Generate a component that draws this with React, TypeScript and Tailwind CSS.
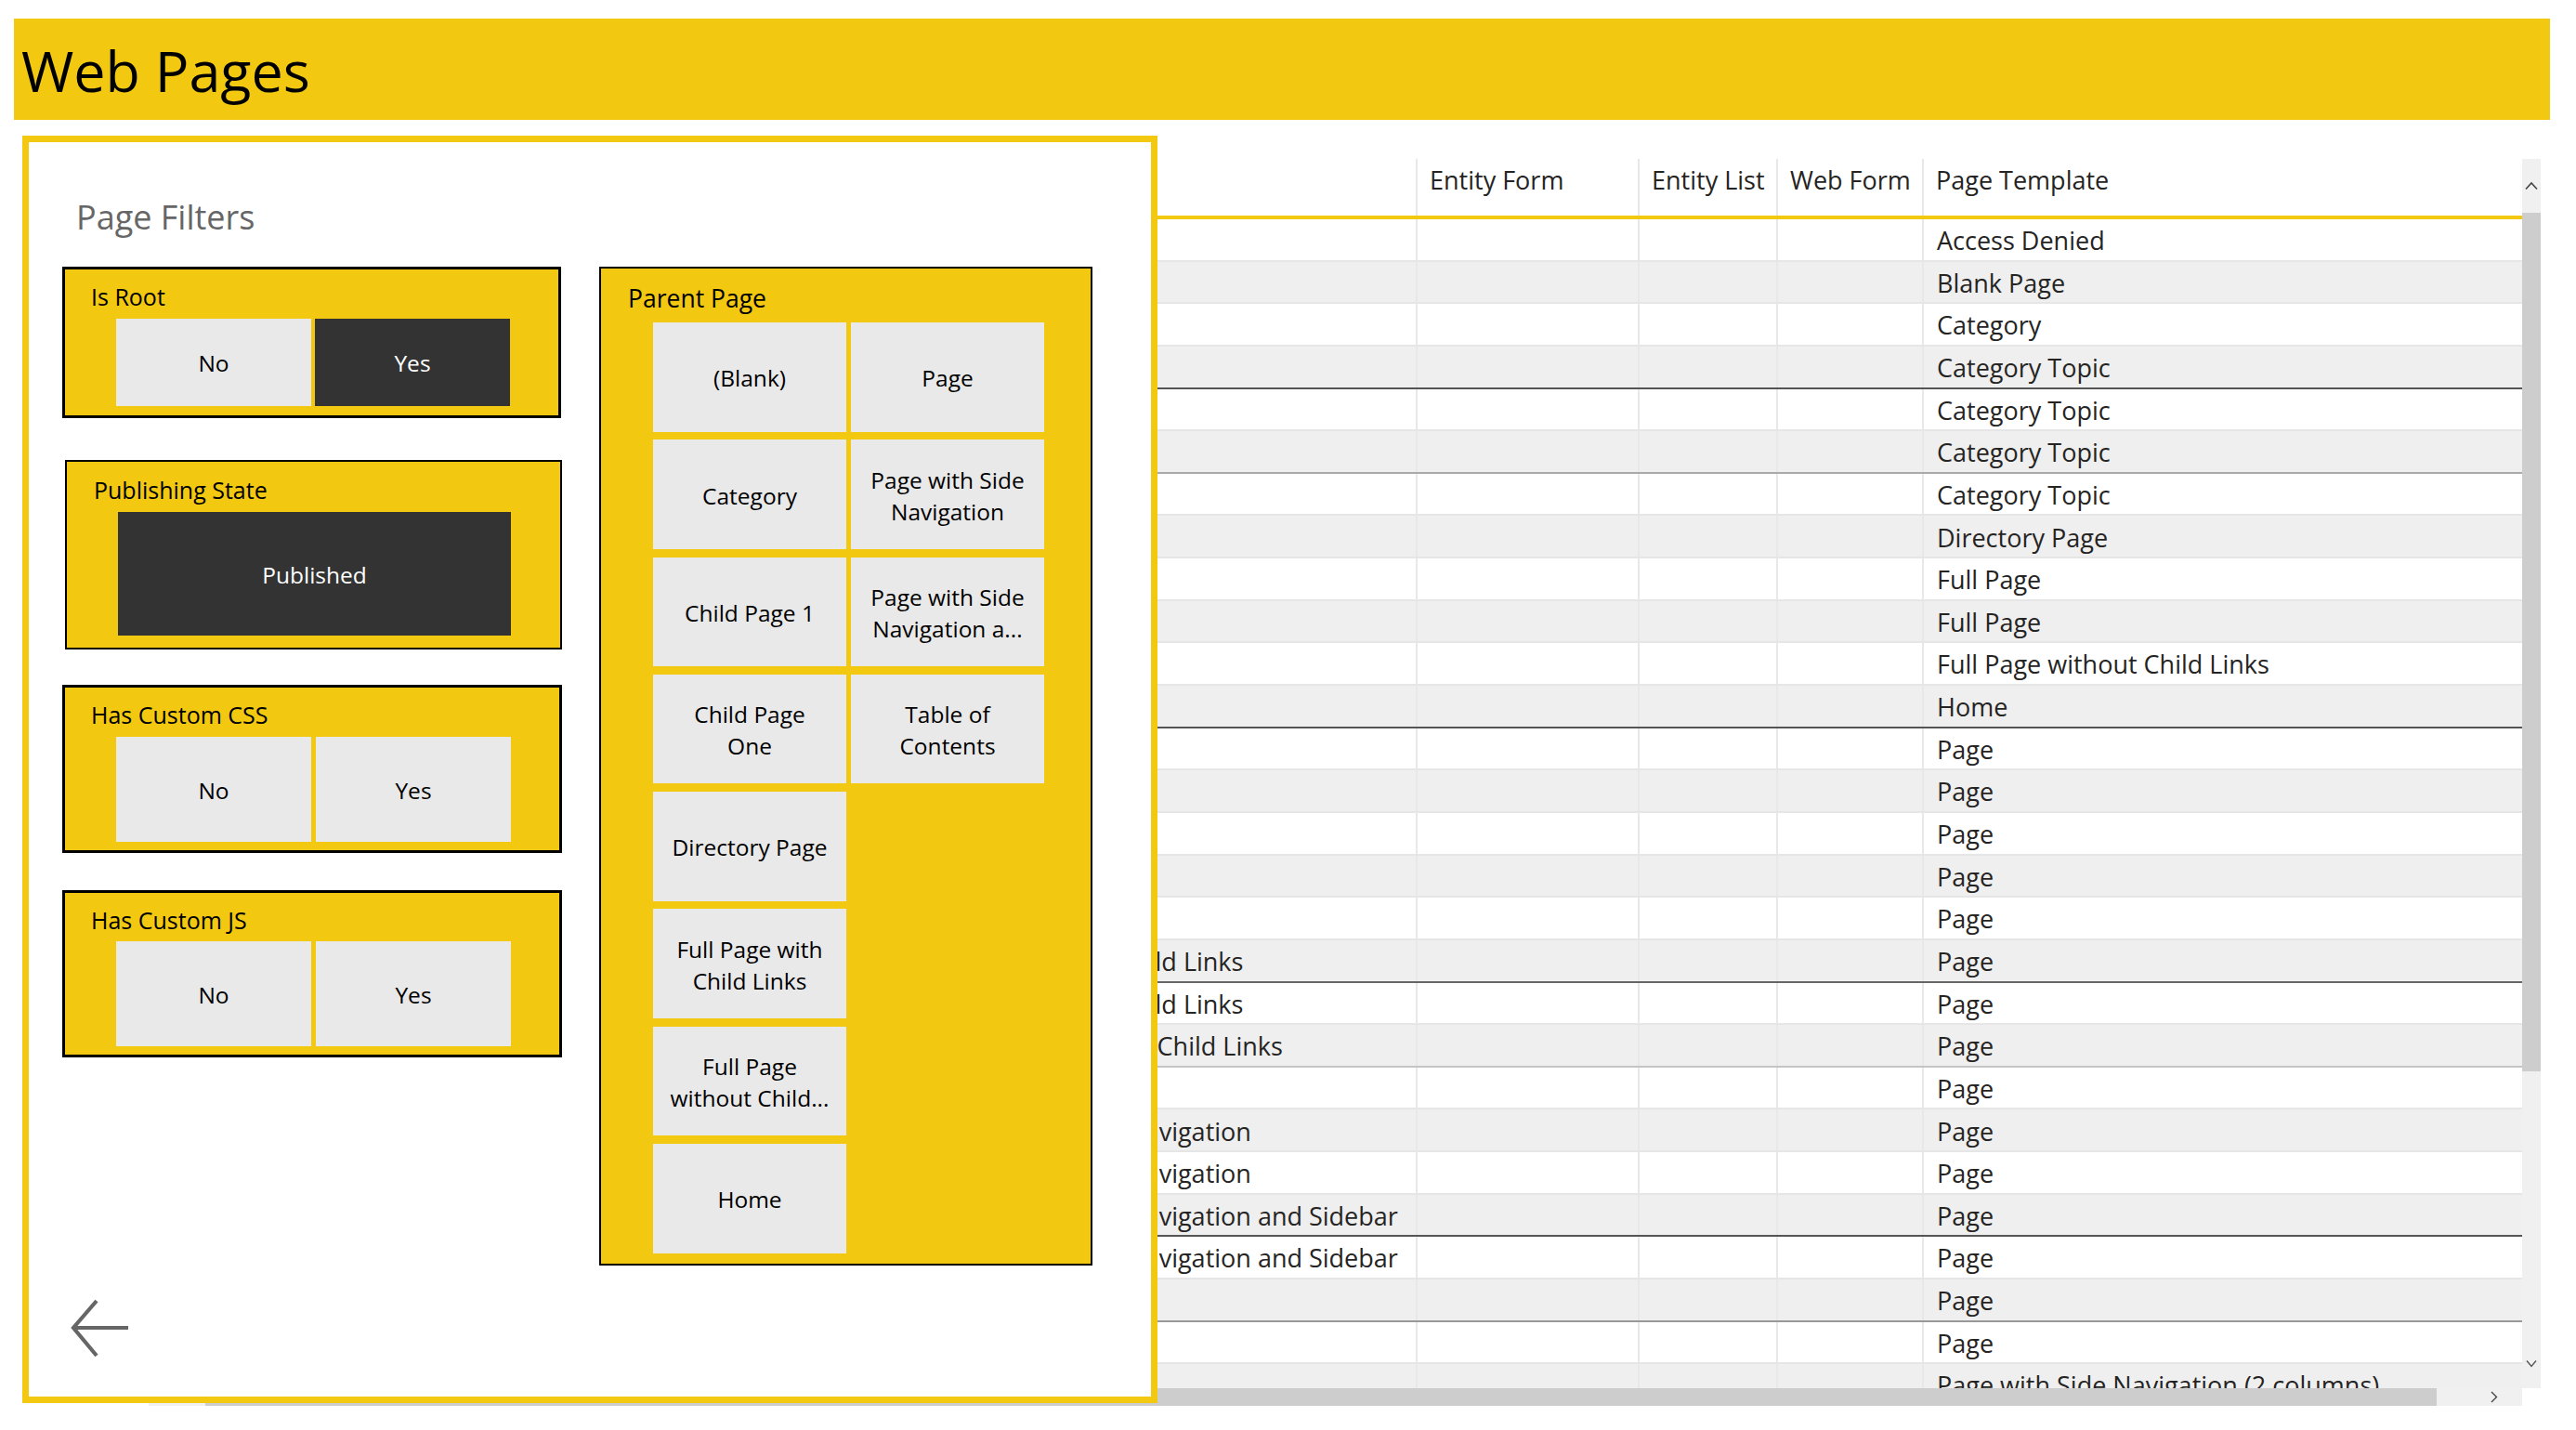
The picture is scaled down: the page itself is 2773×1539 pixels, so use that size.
import React from "react";

const YELLOW = "bg-[#F2C811]";

type Row = { parent: string; template: string; line?: string };

const ROWS: Row[] = [
  { parent: "", template: "Access Denied" },
  { parent: "", template: "Blank Page" },
  { parent: "", template: "Category" },
  { parent: "", template: "Category Topic", line: "border-b-[#555555]" },
  { parent: "", template: "Category Topic" },
  { parent: "", template: "Category Topic", line: "border-b-[#aaaaaa]" },
  { parent: "", template: "Category Topic" },
  { parent: "", template: "Directory Page" },
  { parent: "", template: "Full Page" },
  { parent: "", template: "Full Page" },
  { parent: "", template: "Full Page without Child Links" },
  { parent: "", template: "Home", line: "border-b-[#555555]" },
  { parent: "", template: "Page" },
  { parent: "", template: "Page" },
  { parent: "", template: "Page" },
  { parent: "", template: "Page" },
  { parent: "", template: "Page" },
  { parent: "Full Page with Child Links", template: "Page", line: "border-b-[#666666]" },
  { parent: "Full Page with Child Links", template: "Page" },
  { parent: "Full Page without Child Links", template: "Page", line: "border-b-[#c4c4c4]" },
  { parent: "", template: "Page" },
  { parent: "Page with Side Navigation", template: "Page" },
  { parent: "Page with Side Navigation", template: "Page" },
  { parent: "Page with Side Navigation and Sidebar", template: "Page", line: "border-b-[#555555]" },
  { parent: "Page with Side Navigation and Sidebar", template: "Page" },
  { parent: "", template: "Page", line: "border-b-[#999999]" },
  { parent: "", template: "Page" },
  { parent: "", template: "Page with Side Navigation (2 columns)" },
];

const PARENT_TILES: (string[] | null)[][] = [
  [["(Blank)"], ["Page"]],
  [["Category"], ["Page with Side", "Navigation"]],
  [["Child Page 1"], ["Page with Side", "Navigation a..."]],
  [["Child Page", "One"], ["Table of", "Contents"]],
  [["Directory Page"], null],
  [["Full Page with", "Child Links"], null],
  [["Full Page", "without Child..."], null],
  [["Home"], null],
];

function Cell({ w, children, last }: { w: string; children?: React.ReactNode; last?: boolean }) {
  return (
    <div
      className={`${w} shrink-0 h-full flex items-center pl-[13px] pt-[3px] overflow-hidden whitespace-nowrap ${
        last ? "" : "border-r-2 border-r-[#e8e8e8]"
      }`}
    >
      {children}
    </div>
  );
}

function DataTable() {
  return (
    <div className="ml-[160px] mt-[42px] w-[2575px] flex flex-col text-[27px] text-[#252423]">
      <div className="flex h-[1323px]">
        <div className="flex-1 overflow-hidden">
          <div className="flex h-[65px] border-b-4 border-b-[#F2C811]">
            {[
              ["w-[850px]", "Name"],
              ["w-[516px]", "Parent Page"],
              ["w-[239px]", "Entity Form"],
              ["w-[149px]", "Entity List"],
              ["w-[157px]", "Web Form"],
              ["w-[644px]", "Page Template"],
            ].map(([w, label], i) => (
              <div
                key={label}
                className={`${w} shrink-0 h-full pl-[13px] pt-[7px] leading-[32px] whitespace-nowrap overflow-hidden ${
                  i === 5 ? "" : "border-r-2 border-r-[#e8e8e8]"
                } ${i < 2 ? "text-transparent" : ""}`}
              >
                {label}
              </div>
            ))}
          </div>
          {ROWS.map((r, i) => (
            <div
              key={i}
              className={`flex h-[45.65px] border-b-2 ${r.line ?? "border-b-[#e6e6e6]"} ${
                i % 2 === 1 ? "bg-[#efefef]" : "bg-white"
              }`}
            >
              <Cell w="w-[850px]" />
              <Cell w="w-[516px]">{r.parent}</Cell>
              <Cell w="w-[239px]" />
              <Cell w="w-[149px]" />
              <Cell w="w-[157px]" />
              <Cell w="w-[644px]" last>
                <span className="pl-[1px]">{r.template}</span>
              </Cell>
            </div>
          ))}
        </div>
        <div className="w-[20px] shrink-0 flex flex-col bg-[#f0f0f0]">
          <div className="h-[58px] flex items-center justify-center">
            <svg width="14" height="10" viewBox="0 0 14 10">
              <path d="M1 8.5 L7 2 L13 8.5" fill="none" stroke="#444" strokeWidth="1.6" />
            </svg>
          </div>
          <div className="h-[924px] bg-[#cdcdcd]" />
          <div className="flex-1 flex items-end justify-center pb-[22px]">
            <svg width="12" height="9" viewBox="0 0 12 9">
              <path d="M1 1.5 L6 7.5 L11 1.5" fill="none" stroke="#555" strokeWidth="1.4" />
            </svg>
          </div>
        </div>
      </div>
      <div className="flex h-[19px]">
        <div className="flex-1 bg-[#f0f0f0] flex items-center">
          <div className="ml-[61px] w-[2402px] h-full bg-[#cdcdcd]" />
          <div className="flex-1 flex justify-end pr-[26px]">
            <svg width="9" height="13" viewBox="0 0 9 13">
              <path d="M2 1 L7.5 6.5 L2 12" fill="none" stroke="#444" strokeWidth="1.4" />
            </svg>
          </div>
        </div>
        <div className="w-[20px] shrink-0" />
      </div>
    </div>
  );
}

function Toggle({ on, label, h }: { on: boolean; label: string; h: string }) {
  return (
    <div
      className={`flex-1 ${h} flex items-center justify-center pt-[3px] text-[24.5px] ${
        on ? "bg-[#333333] text-white" : "bg-[#e9e9e9] text-black"
      }`}
    >
      {label}
    </div>
  );
}

function SlicerBox({
  title,
  w,
  border,
  children,
  pb,
  gap,
}: {
  title: string;
  w: string;
  border: string;
  children: React.ReactNode;
  pb: string;
  gap: string;
}) {
  return (
    <div className={`${w} ${border} border-black ${YELLOW} pt-[11px] ${pb}`}>
      <div className="pl-[28px] h-[32px] pt-[2px] leading-[32px] text-[25px] text-black">{title}</div>
      <div className={`${gap} pl-[55px] pr-[52px]`}>{children}</div>
    </div>
  );
}

function FilterPanel() {
  return (
    <div className="absolute left-[24px] top-[146px] w-[1222px] h-[1364px] border-[7px] border-[#F2C811] bg-white">
      <div className="pt-[57px] pl-[51px] h-[103px] text-[36px] leading-[48px] text-[#666666]">
        Page Filters
      </div>
      <div className="mt-[31px] ml-[36px] flex gap-[40px]">
        <div className="w-[538px] flex flex-col">
          <SlicerBox title="Is Root" w="w-[537px]" border="border-[3px]" pb="pb-[10px]" gap="mt-[10px]">
            <div className="flex gap-[4px]">
              <Toggle on={false} label="No" h="h-[94px]" />
              <Toggle on label="Yes" h="h-[94px]" />
            </div>
          </SlicerBox>
          <div className="mt-[45px] ml-[3px]">
            <div className={`w-[535px] border-2 border-black ${YELLOW} pt-[12px] pb-[13px]`}>
              <div className="pl-[29px] h-[32px] pt-[2px] leading-[32px] text-[25px] text-black">
                Publishing State
              </div>
              <div className="mt-[10px] pl-[55px] pr-[53px]">
                <div className="h-[133px] pt-[3px] bg-[#333333] text-white text-[24.5px] flex items-center justify-center">
                  Published
                </div>
              </div>
            </div>
          </div>
          <div className="mt-[38px]">
            <SlicerBox title="Has Custom CSS" w="w-[538px]" border="border-[3px]" pb="pb-[9px]" gap="mt-[10px]">
              <div className="flex gap-[5px]">
                <Toggle on={false} label="No" h="h-[113px]" />
                <Toggle on={false} label="Yes" h="h-[113px]" />
              </div>
            </SlicerBox>
          </div>
          <div className="mt-[40px]">
            <SlicerBox title="Has Custom JS" w="w-[538px]" border="border-[3px]" pb="pb-[9px]" gap="mt-[9px]">
              <div className="flex gap-[5px]">
                <Toggle on={false} label="No" h="h-[113px]" />
                <Toggle on={false} label="Yes" h="h-[113px]" />
              </div>
            </SlicerBox>
          </div>
        </div>
        <div className={`w-[531px] h-[1075px] border-2 border-black ${YELLOW} pt-[13px]`}>
          <div className="pl-[29px] h-[34px] pt-[2px] leading-[34px] text-[26.5px] text-black">Parent Page</div>
          <div className="mt-[11px] ml-[56px] w-[421px] flex flex-col gap-[8.8px]">
            {PARENT_TILES.map((pair, ri) => (
              <div key={ri} className="flex gap-[5px] h-[117.5px]">
                {pair.map((lines, ci) =>
                  lines ? (
                    <div
                      key={ci}
                      className="w-[208px] h-full pt-[3px] bg-[#e9e9e9] flex flex-col items-center justify-center text-[24.5px] leading-[34px] text-black"
                    >
                      {lines.map((l) => (
                        <div key={l} className="whitespace-nowrap">
                          {l}
                        </div>
                      ))}
                    </div>
                  ) : (
                    <div key={ci} className="w-[208px] h-full" />
                  )
                )}
              </div>
            ))}
          </div>
        </div>
      </div>
      <div className="mt-[36px] ml-[45px]">
        <svg width="64" height="63" viewBox="0 0 64 63">
          <path d="M28 2 L3 31 L28 61" fill="none" stroke="#666666" strokeWidth="4.2" />
          <path d="M3 31 L62 31" fill="none" stroke="#666666" strokeWidth="4.2" />
        </svg>
      </div>
    </div>
  );
}

export default function App() {
  return (
    <div className="relative w-[2773px] h-[1539px] bg-white overflow-hidden font-['Open_Sans',sans-serif]">
      <header className={`ml-[15px] mt-[20px] w-[2730px] h-[109px] ${YELLOW} pt-[25px] pl-[8px]`}>
        <h1 className="text-[61px] leading-[61px] text-black">Web Pages</h1>
      </header>
      <DataTable />
      <FilterPanel />
    </div>
  );
}
